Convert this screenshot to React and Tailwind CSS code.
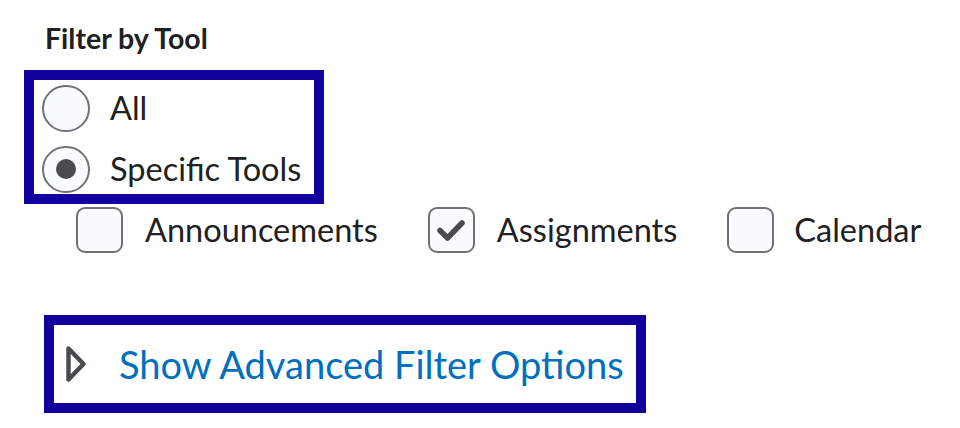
import React from "react";

function Radio({ checked, label, className }) {
  return (
    <label className={`flex items-center gap-[20px] ${className}`}>
      <span className="flex h-[47px] w-[48px] shrink-0 items-center justify-center rounded-full border-2 border-[#6e7376] bg-[#f9fbff]">
        {checked && <span className="h-[20px] w-[20px] rounded-full bg-[#494c4e]" />}
      </span>
      <span className="text-[32.5px] leading-none text-[#202122]">{label}</span>
    </label>
  );
}

function Checkbox({ checked, label, className }) {
  return (
    <label className={`flex items-center gap-[22px] ${className}`}>
      <span className="flex h-[46px] w-[47px] shrink-0 items-center justify-center rounded-[9px] border-2 border-[#6e7376] bg-[#f9fbff]">
        {checked && (
          <svg width="30" height="24" viewBox="0 0 30 24" fill="none">
            <path
              d="M4 12.5 L11.5 20 L26 5"
              stroke="#494c4e"
              strokeWidth="5.5"
              strokeLinecap="round"
              strokeLinejoin="round"
            />
          </svg>
        )}
      </span>
      <span className="text-[32.5px] leading-none text-[#202122]">{label}</span>
    </label>
  );
}

export default function App() {
  return (
    <div
      className="h-[428px] w-[960px] bg-white pt-[21px]"
      style={{ fontFamily: "Lato, 'Noto Sans', sans-serif" }}
    >
      <h2 className="ml-[45px] text-[28.5px] font-bold leading-[34px] text-[#202122]">
        Filter by Tool
      </h2>

      {/* Radio group */}
      <div className="ml-[24px] mt-[15px] flex h-[134px] w-[300px] flex-col border-[10px] border-[#11009b] pl-[8px] pt-[5px]">
        <Radio label="All" className="h-[47px]" />
        <Radio checked label="Specific Tools" className="mt-[13px] h-[48px]" />
      </div>

      {/* Tool checkboxes */}
      <div className="ml-[76px] mt-[3px] flex h-[46px] items-center gap-[50px]">
        <Checkbox label="Announcements" />
        <Checkbox checked label="Assignments" />
        <Checkbox label="Calendar" className="!gap-[20px]" />
      </div>

      {/* Advanced toggle */}
      <div className="ml-[44px] mt-[62px] flex h-[98px] w-[602px] items-center border-[10px] border-[#11009b] pl-[12px]">
        <button className="flex items-center gap-[33px]">
          <svg width="20" height="36" viewBox="0 0 20 36" fill="none">
            <path
              d="M2.5 2.5 L17.5 18 L2.5 33.5 Z"
              stroke="#494c4e"
              strokeWidth="4.5"
              strokeLinejoin="round"
            />
          </svg>
          <span className="text-[38px] leading-none text-[#006fbf]">
            Show Advanced Filter Options
          </span>
        </button>
      </div>
    </div>
  );
}
